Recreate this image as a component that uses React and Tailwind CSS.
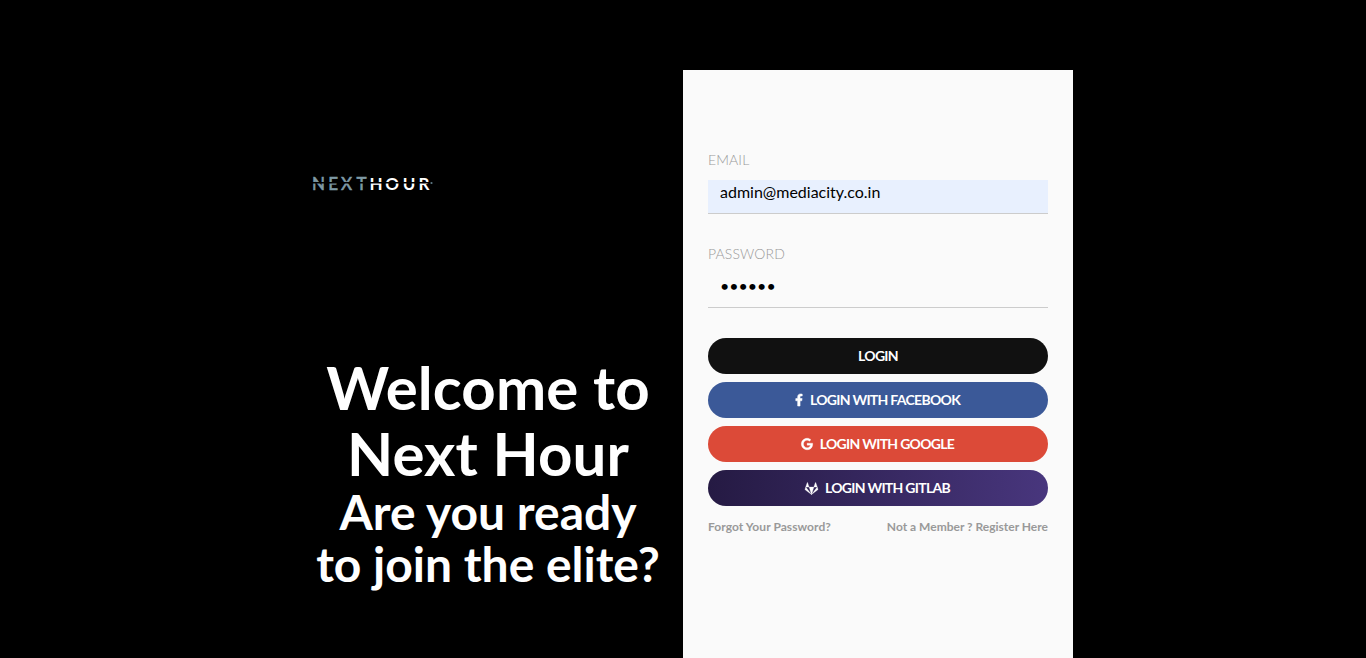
import { FaFacebookF, FaGoogle, FaGitlab } from "react-icons/fa";

function Logo() {
  return (
    <svg className="block h-[40px] w-[140px]" viewBox="0 0 140 40" fontFamily="Lato, sans-serif" fontSize="17" role="img" aria-label="NEXTHOUR">
      <text x="9 25.2 38 53.4" y="25.3" fontWeight="400" fill="#7f9aa6" stroke="#7f9aa6" strokeWidth="0.6">NEXT</text>
      <text x="66.4 82.3 99.7 115.4" y="25.3" fontWeight="700" fill="#ffffff">HOUR</text>
      <path d="M9 17.8H127" stroke="#000" strokeWidth="1.6" />
      <circle cx="128.5" cy="18" r="1.1" fill="#5f7a86" />
    </svg>
  );
}

function Field({ label, type, value }) {
  return (
    <label className="block h-[94px]">
      <span className="block h-5 text-[14px] leading-5 font-light tracking-[0.12px] text-[#999]">{label}</span>
      <input
        type={type}
        defaultValue={value}
        className={
          type === "email"
            ? "mt-[10px] block h-[34px] w-full border-b border-[#ccc] bg-[#e8f0fe] px-3 pt-0 pb-[10px] text-[16px] text-black outline-none"
            : "mt-[10px] block h-[34px] w-full border-b border-[#ccc] bg-transparent px-3 pt-0 pb-[10px] text-[16px] text-black outline-none"
        }
      />
    </label>
  );
}

function LoginButton({ Icon, iconSize, color, children }) {
  return (
    <button className={`flex h-9 w-full items-center justify-center rounded-full text-[14px] leading-5 font-bold tracking-[-0.7px] text-white ${color}`}>
      {Icon && <Icon className={`mr-[7px] overflow-visible stroke-current ${iconSize}`} />}
      <span>{children}</span>
    </button>
  );
}

export default function App() {
  return (
    <main className="flex h-[658px] w-full justify-center overflow-hidden bg-black pt-[70px] font-['Lato',sans-serif]">
      <div className="flex w-[780px]">
        <section className="w-[390px] pt-[95px] pl-[10px] text-white">
          <Logo />
          <div className="mt-[149px] w-[370px] text-center font-bold">
            <h1 className="text-[60px] leading-[66px] tracking-[0.1px]">Welcome to<br />Next Hour</h1>
            <h2 className="text-[48px] leading-[52px]">Are you ready<br />to join the elite?</h2>
          </div>
        </section>
        <section className="h-[658px] w-[390px] bg-[#fafafa] px-[25px] pt-[80px]">
          <Field label="EMAIL" type="email" value="admin@mediacity.co.in" />
          <Field label="PASSWORD" type="password" value="123456" />
          <div className="flex flex-col gap-2">
            <LoginButton color="bg-[#111]">LOGIN</LoginButton>
            <LoginButton Icon={FaFacebookF} iconSize="h-[12px] w-[8px] stroke-[24px]" color="bg-[#3b5998] pr-px">LOGIN WITH FACEBOOK</LoginButton>
            <LoginButton Icon={FaGoogle} iconSize="h-[12px] w-[12px] stroke-[12px]" color="bg-[#dc4a38] pr-px">LOGIN WITH GOOGLE</LoginButton>
            <LoginButton Icon={FaGitlab} iconSize="h-[13px] w-[13px] stroke-[12px]" color="bg-linear-[90deg,#251a43,#48367d] pr-px">LOGIN WITH GITLAB</LoginButton>
          </div>
          <div className="mt-[11px] flex justify-between text-[12px] leading-5 font-bold text-[#999]">
            <a className="tracking-[0.06px]">Forgot Your Password?</a>
            <a>Not a Member ? Register Here</a>
          </div>
        </section>
      </div>
    </main>
  );
}
